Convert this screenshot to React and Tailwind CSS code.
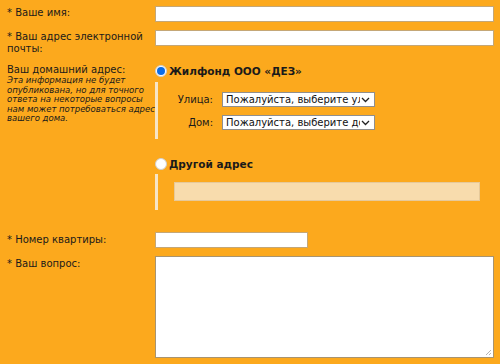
import React from "react";

const Chevron = () => (
  <svg width="9" height="6" viewBox="0 0 9 6" className="absolute right-[4px] top-[4px]">
    <path d="M1 1 L4.5 4.5 L8 1" fill="none" stroke="#222" strokeWidth="1.3" />
  </svg>
);

const Select = ({ text }) => (
  <div className="relative h-[15px] w-[153px] overflow-hidden border border-[#8f8f8f] bg-white pl-[3px] pr-[14px] text-[10px] leading-[13px] whitespace-nowrap text-[#111]">
    <div className="overflow-hidden">{text}</div>
    <Chevron />
  </div>
);

const Radio = ({ checked }) => (
  <div className="flex h-[12px] w-[12px] items-center justify-center rounded-full border border-[#cfcfcf] bg-white">
    {checked ? <div className="h-[8px] w-[8px] rounded-full bg-[#0a6ce8]" /> : null}
  </div>
);

export default function App() {
  return (
    <div className="h-[364px] w-[500px] overflow-hidden bg-[#fca91d] pl-[7px] pr-[6px] pt-[6px] font-['DejaVu_Sans',Verdana,sans-serif] text-[10px] leading-[12px] text-[#1a1a1a]">
      <div className="flex">
        <div className="w-[148px] pt-[1px]">* Ваше имя:</div>
        <div className="h-[16px] flex-1 border border-[#c4a777] bg-white" />
      </div>

      <div className="mt-[8px] flex">
        <div className="w-[148px] pt-[1px]">
          * Ваш адрес электронной
          <br />
          почты:
        </div>
        <div className="h-[16px] flex-1 border border-[#c4a777] bg-white" />
      </div>

      <div className="mt-[7px] flex">
        <div className="w-[148px] pt-[2px]">
          <div>Ваш домашний адрес:</div>
          <div className="text-[8.5px] leading-[9.5px] italic">
            Эта информация не будет
            <br />
            опубликована, но для точного
            <br />
            ответа на некоторые вопросы
            <br />
            нам может потребоваться адрес
            <br />
            вашего дома.
          </div>
        </div>
        <div className="flex-1">
          <div className="flex items-center gap-[2px] pt-[3px]">
            <Radio checked />
            <span className="text-[10.5px] font-bold">Жилфонд ООО «ДЕЗ»</span>
          </div>
          <div className="mt-[5px] flex h-[57px]">
            <div className="w-[3px] bg-[#f7e5c6]" />
            <div className="pt-[10px]">
              <div className="flex items-center">
                <div className="w-[55px] text-right">Улица:</div>
                <div className="ml-[9px]">
                  <Select text="Пожалуйста, выберите улицу" />
                </div>
              </div>
              <div className="mt-[8px] flex items-center">
                <div className="w-[55px] text-right">Дом:</div>
                <div className="ml-[9px]">
                  <Select text="Пожалуйста, выберите дом" />
                </div>
              </div>
            </div>
          </div>
          <div className="mt-[19px] flex items-center gap-[2px]">
            <Radio />
            <span className="text-[10.5px] font-bold">Другой адрес</span>
          </div>
          <div className="mt-[4px] flex h-[36px]">
            <div className="w-[3px] bg-[#f7e5c6]" />
            <div className="ml-[16px] mt-[8px] h-[19px] w-[306px] border border-[#e6c99a] bg-[#f8dcad]" />
          </div>
        </div>
      </div>

      <div className="mt-[22px] flex">
        <div className="w-[148px] pt-[2px]">* Номер квартиры:</div>
        <div className="h-[16px] w-[153px] border border-[#c4a777] bg-white" />
      </div>

      <div className="mt-[8px] flex">
        <div className="w-[148px] pt-[2px]">* Ваш вопрос:</div>
        <div className="relative h-[102px] flex-1 border border-[#a89470] bg-white">
          <svg width="7" height="7" viewBox="0 0 7 7" className="absolute bottom-[1px] right-[1px]">
            <path d="M6 1 L1 6 M6 4 L4 6" stroke="#b5b5b5" strokeWidth="1" />
          </svg>
        </div>
      </div>
    </div>
  );
}
